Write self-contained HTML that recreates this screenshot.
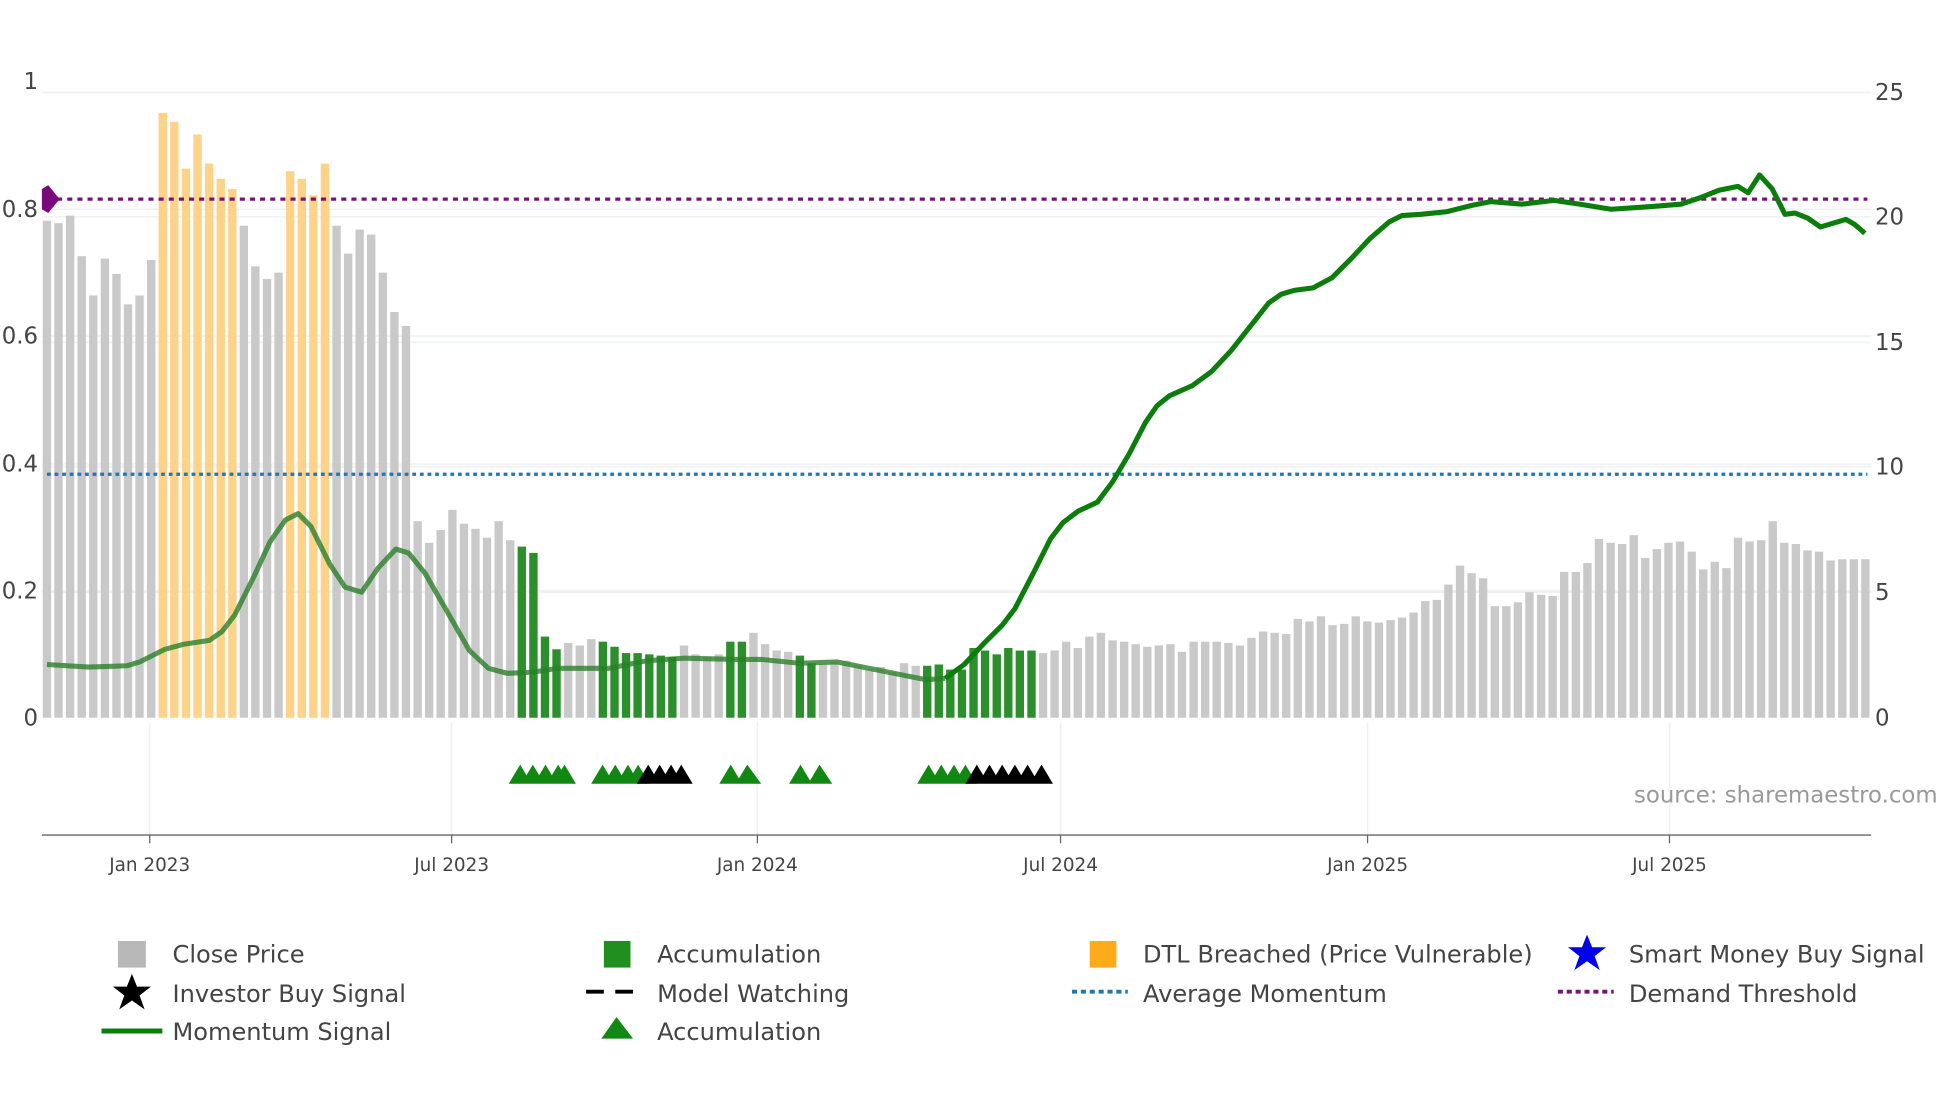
<!DOCTYPE html>
<html><head><meta charset="utf-8"><style>
html,body{margin:0;padding:0;background:#fff;}
svg{display:block;}
text{font-family:"DejaVu Sans","Liberation Sans",sans-serif;fill:#444;}
.g{fill:#c9c9c9}.o{fill:#fdd38a}.a{fill:#2b8f2b}
</style></head><body>
<svg width="1960" height="1102" viewBox="0 0 1545 869" preserveAspectRatio="none" xmlns="http://www.w3.org/2000/svg">
<rect width="1545" height="869" fill="#fff"/>
<!-- grid -->
<g stroke="#eef0f4" stroke-width="1.2">
<line x1="33" y1="73" x2="1475" y2="73"/><line x1="33" y1="171" x2="1475" y2="171"/><line x1="33" y1="270" x2="1475" y2="270"/><line x1="33" y1="368" x2="1475" y2="368"/><line x1="33" y1="467" x2="1475" y2="467"/>
<line x1="33" y1="165" x2="1475" y2="165"/><line x1="33" y1="265" x2="1475" y2="265"/><line x1="33" y1="366" x2="1475" y2="366"/><line x1="33" y1="466" x2="1475" y2="466"/>
<line x1="118" y1="570" x2="118" y2="658"/><line x1="356" y1="570" x2="356" y2="658"/><line x1="597" y1="570" x2="597" y2="658"/><line x1="836" y1="570" x2="836" y2="658"/><line x1="1078" y1="570" x2="1078" y2="658"/><line x1="1316" y1="570" x2="1316" y2="658"/>
</g>
<g>
<rect class="g" x="33.7" y="174" width="6.6" height="392"/><rect class="g" x="42.8" y="176" width="6.6" height="390"/><rect class="g" x="52" y="170" width="6.6" height="396"/><rect class="g" x="61.1" y="202" width="6.6" height="364"/><rect class="g" x="70.2" y="233" width="6.6" height="333"/><rect class="g" x="79.4" y="204" width="6.6" height="362"/><rect class="g" x="88.5" y="216" width="6.6" height="350"/><rect class="g" x="97.6" y="240" width="6.6" height="326"/><rect class="g" x="106.7" y="233" width="6.6" height="333"/><rect class="g" x="115.9" y="205" width="6.6" height="361"/>
<rect class="o" x="125" y="89" width="6.6" height="477"/><rect class="o" x="134.1" y="96" width="6.6" height="470"/><rect class="o" x="143.3" y="133" width="6.6" height="433"/><rect class="o" x="152.4" y="106" width="6.6" height="460"/><rect class="o" x="161.5" y="129" width="6.6" height="437"/><rect class="o" x="170.7" y="141" width="6.6" height="425"/><rect class="o" x="179.8" y="149" width="6.6" height="417"/>
<rect class="g" x="188.9" y="178" width="6.6" height="388"/><rect class="g" x="198" y="210" width="6.6" height="356"/><rect class="g" x="207.2" y="220" width="6.6" height="346"/><rect class="g" x="216.3" y="215" width="6.6" height="351"/>
<rect class="o" x="225.4" y="135" width="6.6" height="431"/><rect class="o" x="234.6" y="141" width="6.6" height="425"/><rect class="o" x="243.7" y="154" width="6.6" height="412"/><rect class="o" x="252.8" y="129" width="6.6" height="437"/>
<rect class="g" x="262" y="178" width="6.6" height="388"/><rect class="g" x="271.1" y="200" width="6.6" height="366"/><rect class="g" x="280.2" y="181" width="6.6" height="385"/><rect class="g" x="289.3" y="185" width="6.6" height="381"/><rect class="g" x="298.5" y="215" width="6.6" height="351"/><rect class="g" x="307.6" y="246" width="6.6" height="320"/><rect class="g" x="316.7" y="257" width="6.6" height="309"/>
<rect class="g" x="325.9" y="411" width="6.6" height="155"/><rect class="g" x="335" y="428" width="6.6" height="138"/><rect class="g" x="344.1" y="418" width="6.6" height="148"/><rect class="g" x="353.3" y="402" width="6.6" height="164"/><rect class="g" x="362.4" y="413" width="6.6" height="153"/><rect class="g" x="371.5" y="417" width="6.6" height="149"/><rect class="g" x="380.6" y="424" width="6.6" height="142"/><rect class="g" x="389.8" y="411" width="6.6" height="155"/><rect class="g" x="398.9" y="426" width="6.6" height="140"/>
<rect class="a" x="408" y="431" width="6.6" height="135"/><rect class="a" x="417.2" y="436" width="6.6" height="130"/><rect class="a" x="426.3" y="502" width="6.6" height="64"/><rect class="a" x="435.4" y="512" width="6.6" height="54"/>
<rect class="g" x="444.6" y="507" width="6.6" height="59"/><rect class="g" x="453.7" y="509" width="6.6" height="57"/><rect class="g" x="462.8" y="504" width="6.6" height="62"/>
<rect class="a" x="471.9" y="506" width="6.6" height="60"/><rect class="a" x="481.1" y="510" width="6.6" height="56"/><rect class="a" x="490.2" y="515" width="6.6" height="51"/><rect class="a" x="499.3" y="515" width="6.6" height="51"/><rect class="a" x="508.5" y="516" width="6.6" height="50"/><rect class="a" x="517.6" y="517" width="6.6" height="49"/><rect class="a" x="526.7" y="518" width="6.6" height="48"/>
<rect class="g" x="535.9" y="509" width="6.6" height="57"/><rect class="g" x="545" y="516" width="6.6" height="50"/><rect class="g" x="554.1" y="518" width="6.6" height="48"/><rect class="g" x="563.2" y="516" width="6.6" height="50"/>
<rect class="a" x="572.4" y="506" width="6.6" height="60"/><rect class="a" x="581.5" y="506" width="6.6" height="60"/>
<rect class="g" x="590.6" y="499" width="6.6" height="67"/><rect class="g" x="599.8" y="508" width="6.6" height="58"/><rect class="g" x="608.9" y="513" width="6.6" height="53"/><rect class="g" x="618" y="514" width="6.6" height="52"/>
<rect class="a" x="627.2" y="517" width="6.6" height="49"/><rect class="a" x="636.3" y="523" width="6.6" height="43"/>
<rect class="g" x="645.4" y="524" width="6.6" height="42"/><rect class="g" x="654.5" y="522" width="6.6" height="44"/><rect class="g" x="663.7" y="521" width="6.6" height="45"/><rect class="g" x="672.8" y="525" width="6.6" height="41"/><rect class="g" x="681.9" y="528" width="6.6" height="38"/><rect class="g" x="691.1" y="526" width="6.6" height="40"/><rect class="g" x="700.2" y="530" width="6.6" height="36"/><rect class="g" x="709.3" y="523" width="6.6" height="43"/><rect class="g" x="718.5" y="525" width="6.6" height="41"/>
<rect class="a" x="727.6" y="525" width="6.6" height="41"/><rect class="a" x="736.7" y="524" width="6.6" height="42"/><rect class="a" x="745.8" y="528" width="6.6" height="38"/><rect class="a" x="755" y="528" width="6.6" height="38"/><rect class="a" x="764.1" y="511" width="6.6" height="55"/><rect class="a" x="773.2" y="513" width="6.6" height="53"/><rect class="a" x="782.4" y="516" width="6.6" height="50"/><rect class="a" x="791.5" y="511" width="6.6" height="55"/><rect class="a" x="800.6" y="513" width="6.6" height="53"/><rect class="a" x="809.8" y="513" width="6.6" height="53"/>
<rect class="g" x="818.9" y="515" width="6.6" height="51"/><rect class="g" x="828" y="513" width="6.6" height="53"/><rect class="g" x="837.1" y="506" width="6.6" height="60"/><rect class="g" x="846.3" y="511" width="6.6" height="55"/><rect class="g" x="855.4" y="502" width="6.6" height="64"/><rect class="g" x="864.5" y="499" width="6.6" height="67"/><rect class="g" x="873.7" y="505" width="6.6" height="61"/><rect class="g" x="882.8" y="506" width="6.6" height="60"/><rect class="g" x="891.9" y="508" width="6.6" height="58"/><rect class="g" x="901.1" y="510" width="6.6" height="56"/><rect class="g" x="910.2" y="509" width="6.6" height="57"/><rect class="g" x="919.3" y="508" width="6.6" height="58"/><rect class="g" x="928.4" y="514" width="6.6" height="52"/><rect class="g" x="937.6" y="506" width="6.6" height="60"/><rect class="g" x="946.7" y="506" width="6.6" height="60"/><rect class="g" x="955.8" y="506" width="6.6" height="60"/><rect class="g" x="965" y="507" width="6.6" height="59"/><rect class="g" x="974.1" y="509" width="6.6" height="57"/><rect class="g" x="983.2" y="503" width="6.6" height="63"/><rect class="g" x="992.4" y="498" width="6.6" height="68"/><rect class="g" x="1001.5" y="499" width="6.6" height="67"/><rect class="g" x="1010.6" y="500" width="6.6" height="66"/><rect class="g" x="1019.7" y="488" width="6.6" height="78"/><rect class="g" x="1028.9" y="490" width="6.6" height="76"/><rect class="g" x="1038" y="486" width="6.6" height="80"/><rect class="g" x="1047.1" y="493" width="6.6" height="73"/><rect class="g" x="1056.3" y="492" width="6.6" height="74"/><rect class="g" x="1065.4" y="486" width="6.6" height="80"/><rect class="g" x="1074.5" y="490" width="6.6" height="76"/><rect class="g" x="1083.7" y="491" width="6.6" height="75"/><rect class="g" x="1092.8" y="489" width="6.6" height="77"/><rect class="g" x="1101.9" y="487" width="6.6" height="79"/><rect class="g" x="1111" y="483" width="6.6" height="83"/><rect class="g" x="1120.2" y="474" width="6.6" height="92"/><rect class="g" x="1129.3" y="473" width="6.6" height="93"/><rect class="g" x="1138.4" y="461" width="6.6" height="105"/><rect class="g" x="1147.6" y="446" width="6.6" height="120"/><rect class="g" x="1156.7" y="452" width="6.6" height="114"/><rect class="g" x="1165.8" y="456" width="6.6" height="110"/><rect class="g" x="1175" y="478" width="6.6" height="88"/><rect class="g" x="1184.1" y="478" width="6.6" height="88"/><rect class="g" x="1193.2" y="475" width="6.6" height="91"/><rect class="g" x="1202.3" y="467" width="6.6" height="99"/><rect class="g" x="1211.5" y="469" width="6.6" height="97"/><rect class="g" x="1220.6" y="470" width="6.6" height="96"/><rect class="g" x="1229.7" y="451" width="6.6" height="115"/><rect class="g" x="1238.9" y="451" width="6.6" height="115"/><rect class="g" x="1248" y="444" width="6.6" height="122"/><rect class="g" x="1257.1" y="425" width="6.6" height="141"/><rect class="g" x="1266.3" y="428" width="6.6" height="138"/><rect class="g" x="1275.4" y="429" width="6.6" height="137"/><rect class="g" x="1284.5" y="422" width="6.6" height="144"/><rect class="g" x="1293.6" y="440" width="6.6" height="126"/><rect class="g" x="1302.8" y="433" width="6.6" height="133"/><rect class="g" x="1311.9" y="428" width="6.6" height="138"/><rect class="g" x="1321" y="427" width="6.6" height="139"/><rect class="g" x="1330.2" y="435" width="6.6" height="131"/><rect class="g" x="1339.3" y="449" width="6.6" height="117"/><rect class="g" x="1348.4" y="443" width="6.6" height="123"/><rect class="g" x="1357.6" y="448" width="6.6" height="118"/><rect class="g" x="1366.7" y="424" width="6.6" height="142"/><rect class="g" x="1375.8" y="427" width="6.6" height="139"/><rect class="g" x="1384.9" y="426" width="6.6" height="140"/><rect class="g" x="1394.1" y="411" width="6.6" height="155"/><rect class="g" x="1403.2" y="428" width="6.6" height="138"/><rect class="g" x="1412.3" y="429" width="6.6" height="137"/><rect class="g" x="1421.5" y="434" width="6.6" height="132"/><rect class="g" x="1430.6" y="435" width="6.6" height="131"/><rect class="g" x="1439.7" y="442" width="6.6" height="124"/><rect class="g" x="1448.9" y="441" width="6.6" height="125"/><rect class="g" x="1458" y="441" width="6.6" height="125"/><rect class="g" x="1467.1" y="441" width="6.6" height="125"/>
</g>
<!-- threshold lines -->
<line x1="37" y1="157" x2="1472" y2="157" stroke="#7a117a" stroke-width="2.6" stroke-dasharray="4,4"/>
<line x1="37" y1="374" x2="1472" y2="374" stroke="#1f77b4" stroke-width="2.6" stroke-dasharray="3,3"/>
<path d="M33,149 L38,146 L47,157 L38,168 L33,165 Z" fill="#7a0a7a"/>
<!-- momentum -->
<path d="M37,524 L70,526 L100,525 L110,522 L130,512 L145,508 L165,505 L175,498 L185,485 L200,455 L213,427 L225,410 L235,405 L245,415 L260,445 L272,463 L285,467 L298,448 L312,433 L322,436 L335,452 L350,478 L370,513 L385,527 L400,531 L420,530 L440,527 L480,527 L510,521 L540,519 L580,520 L600,520 L630,523 L660,522 L700,530 L730,536 L745,535" fill="none" stroke="#2a7f2a" stroke-opacity="0.8" stroke-width="4" stroke-linejoin="round"/>
<path d="M745,535 L760,524 L775,508 L790,493 L800,480 L815,451 L828,425 L838,412 L850,403 L865,396 L877,380 L890,358 L903,333 L912,320 L922,312 L940,304 L955,293 L970,277 L985,258 L1000,239 L1010,232 L1020,229 L1035,227 L1050,219 L1065,204 L1080,188 L1095,175 L1105,170 L1120,169 L1140,167 L1160,162 L1175,159 L1200,161 L1225,158 L1245,161 L1270,165 L1300,163 L1325,161 L1340,156 L1355,150 L1370,147 L1378,152 L1387,138 L1397,149 L1407,169 L1415,168 L1425,172 L1435,179 L1445,176 L1455,173 L1462,177 L1470,184" fill="none" stroke="#0a7d0a" stroke-width="4" stroke-linejoin="round"/>
<!-- triangles -->
<g fill="#118811">
<path d="M401,618 L410,603 L419,618Z M411,618 L420,603 L429,618Z M421,618 L430,603 L439,618Z M431,618 L440,603 L449,618Z M436,618 L445,603 L454,618Z"/>
<path d="M466,618 L475,603 L484,618Z M476,618 L485,603 L494,618Z M486,618 L495,603 L504,618Z M494,618 L503,603 L512,618Z"/>
<path d="M567,618 L576,603 L585,618Z M580,618 L589,603 L600,618Z"/>
<path d="M622,618 L631,603 L640,618Z M637,618 L646,603 L656,618Z"/>
<path d="M723,618 L732,603 L741,618Z M733,618 L742,603 L751,618Z M743,618 L752,603 L761,618Z M752,618 L761,603 L770,618Z"/>
</g>
<g fill="#000">
<path d="M502,618 L511,603 L520,618Z M511,618 L520,603 L529,618Z M520,618 L529,603 L538,618Z M528,618 L537,603 L546,618Z"/>
<path d="M761,618 L770,603 L779,618Z M771,618 L780,603 L789,618Z M781,618 L790,603 L799,618Z M791,618 L800,603 L809,618Z M801,618 L810,603 L819,618Z M812,618 L821,603 L830,618Z"/>
</g>
<!-- axes -->
<line x1="33" y1="658.5" x2="1475" y2="658.5" stroke="#666" stroke-width="1"/>
<g stroke="#666"><line x1="118" y1="658" x2="118" y2="665"/><line x1="356" y1="658" x2="356" y2="665"/><line x1="597" y1="658" x2="597" y2="665"/><line x1="836" y1="658" x2="836" y2="665"/><line x1="1078" y1="658" x2="1078" y2="665"/><line x1="1316" y1="658" x2="1316" y2="665"/></g>
<g font-size="14.5" text-anchor="middle">
<text x="118" y="687">Jan 2023</text><text x="356" y="687">Jul 2023</text><text x="597" y="687">Jan 2024</text><text x="836" y="687">Jul 2024</text><text x="1078" y="687">Jan 2025</text><text x="1316" y="687">Jul 2025</text>
</g>
<g font-size="18" text-anchor="end">
<text x="30" y="70">1</text><text x="30" y="171">0.8</text><text x="30" y="271">0.6</text><text x="30" y="372">0.4</text><text x="30" y="472">0.2</text><text x="30" y="572">0</text>
</g>
<g font-size="18">
<text x="1478" y="79">25</text><text x="1478" y="177">20</text><text x="1478" y="276">15</text><text x="1478" y="374">10</text><text x="1478" y="473">5</text><text x="1478" y="572">0</text>
</g>
<text x="1288" y="633" font-size="18" style="fill:#999">source: sharemaestro.com</text>
<!-- legend -->
<g font-size="19">
<rect x="93" y="742" width="22" height="21" fill="#b8b8b8"/><text x="136" y="759">Close Price</text>
<rect x="476" y="742" width="21" height="21" fill="#1f8f1f"/><text x="518" y="759">Accumulation</text>
<rect x="859" y="742" width="21" height="21" fill="#ffaa1a"/><text x="901" y="759">DTL Breached (Price Vulnerable)</text>
<path d="M1251,737 L1255,747 L1266,747 L1257,754 L1261,765 L1251,758 L1241,765 L1245,754 L1236,747 L1247,747Z" fill="#0000ee"/><text x="1284" y="759">Smart Money Buy Signal</text>
<path d="M104,768 L108,778 L119,778 L110,785 L114,796 L104,789 L94,796 L98,785 L89,778 L100,778Z" fill="#000"/><text x="136" y="790">Investor Buy Signal</text>
<line x1="462" y1="782" x2="506" y2="782" stroke="#000" stroke-width="3" stroke-dasharray="14,9"/><text x="518" y="790">Model Watching</text>
<line x1="845" y1="782" x2="889" y2="782" stroke="#1f77b4" stroke-width="3" stroke-dasharray="4,3"/><text x="901" y="790">Average Momentum</text>
<line x1="1228" y1="782" x2="1272" y2="782" stroke="#7a117a" stroke-width="3" stroke-dasharray="4,3"/><text x="1284" y="790">Demand Threshold</text>
<line x1="80" y1="813" x2="128" y2="813" stroke="#0a7d0a" stroke-width="4"/><text x="136" y="820">Momentum Signal</text>
<path d="M474,819 L486,802 L499,819Z" fill="#118811"/><text x="518" y="820">Accumulation</text>
</g>
</svg>
</body></html>
